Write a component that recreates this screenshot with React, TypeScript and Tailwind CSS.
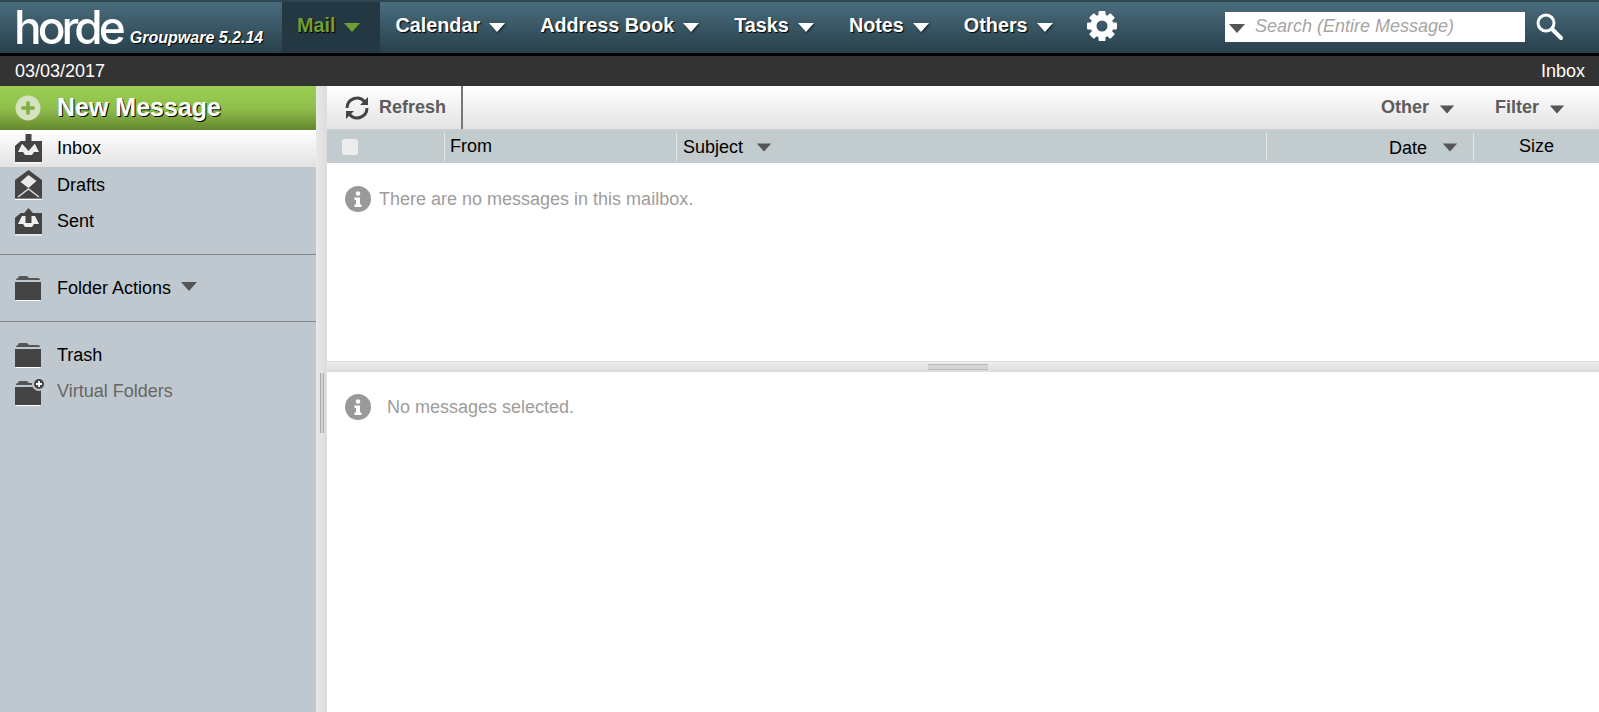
const Caret = ({ className }: { className: string }) => (
  <svg width="18" height="11" viewBox="0 0 18 11" className={className}>
    <path d="M1 1h16l-8 9z" fill="currentColor" />
  </svg>
);

const NavItem = ({ text, active }: { text: string; active?: boolean }) => (
  <div
    className={`flex h-full items-center gap-[8px] pb-[4px] ${
      active ? 'bg-[#233843] pl-[15px] pr-[19px] text-[#6f9e32]' : 'text-white'
    }`}
  >
    <span className="text-[19.800px] font-bold [text-shadow:1px_1px_1px_#000]">{text}</span>
    <Caret className={active ? 'mt-[3px] text-[#6f9e32]' : 'mt-[3px] text-white drop-shadow-[1px_1px_1px_rgba(0,0,0,0.6)]'} />
  </div>
);

const Gear = () => (
  <svg width="32" height="32" viewBox="0 0 32 32" className="blur-[0.4px]">
    {[0, 45, 90, 135, 180, 225, 270, 315].map((a) => (
      <rect key={a} x="12.500" y="1" width="7" height="8" rx="1" fill="#fff" transform={`rotate(${a} 16 16)`} />
    ))}
    <circle cx="16" cy="16" r="8.500" fill="none" stroke="#fff" strokeWidth="6" />
  </svg>
);

const TrayIcon = ({ up }: { up?: boolean }) => (
  <svg width="27" height="30" viewBox="0 0 27 30" className="blur-[0.3px]">
    <path d="M0 29h27" stroke="#fff" />
    <path d="M6 7h21l0 0v21H0V12z" fill="#444" transform="translate(0 0)" />
    <path d="M0 12L6 7h15l6 5" fill="#444" />
    <path d="M7 10h13l4 8h-5l-2 3h-7l-2-3H3z" fill="#eee" />
    {up ? <path d="M13.500 2l7 8h-4v7h-6v-7h-4z" fill="#444" /> : <path d="M10.500 0h6v9h4l-7 8-7-8h4z" fill="#444" />}
  </svg>
);

const DraftsIcon = () => (
  <svg width="27" height="30" viewBox="0 0 27 30" className="blur-[0.3px]">
    <path d="M0 29.500h27" stroke="#fff" />
    <path d="M13.500 0L27 10v18.500H0V10z" fill="#444" />
    <path d="M13.500 5l8 6-8 7-8-6z" fill="#e8eaea" />
    <path d="M3 27l10.500-8L24 27" fill="none" stroke="#d8dcdc" strokeWidth="1.500" />
  </svg>
);

const FolderIcon = () => (
  <svg width="26" height="25" viewBox="0 0 26 25">
    <path d="M.5 24.500h25" stroke="#fff" />
    <path d="M3 2q0-2 2-2h6q2 0 3 2h9q2 0 2 2H1q0-2 2-2z" fill="#555" />
    <path d="M0 6h26v18H0z" fill="#444" />
  </svg>
);

const VirtualIcon = () => (
  <svg width="31" height="29" viewBox="0 0 31 29">
    <path d="M.5 28.500h25" stroke="#fff" />
    <path d="M3 6q0-2 2-2h6q2 0 3 2h9q2 0 2 2H1q0-2 2-2z" fill="#555" />
    <path d="M0 10h26v18H0z" fill="#444" />
    <circle cx="24" cy="7" r="7" fill="#bfc8ce" />
    <circle cx="24" cy="7" r="5" fill="#444" />
    <path d="M24 4v6M21 7h6" stroke="#fff" strokeWidth="1.800" />
  </svg>
);

const InfoIcon = () => (
  <svg width="26" height="26" viewBox="0 0 26 26">
    <circle cx="13" cy="13" r="13" fill="#999" />
    <circle cx="13" cy="7.500" r="2.300" fill="#fff" />
    <path d="M9.500 11.500h5.500v7h1.500v2.500h-7v-2.500H11v-4.500H9.500z" fill="#fff" />
  </svg>
);

const SideRow = ({ icon, text, className }: { icon: React.ReactNode; text: string; className?: string }) => (
  <div className={`flex h-9 items-center ${className ?? ''}`}>
    <div className="flex w-[57px] shrink-0 pl-[15px]">{icon}</div>
    <span className="text-[18px]">{text}</span>
  </div>
);

export default function App() {
  return (
    <div className="flex h-screen flex-col overflow-hidden bg-white font-['Liberation_Sans',Arial,sans-serif]">
      <header className="flex h-[56px] shrink-0 items-stretch border-t-2 border-b-[3px] border-t-[#2e4552] border-b-black bg-gradient-to-b from-[#4a6d7d] to-[#28404c]">
        <div className="flex w-[282px] shrink-0 pl-[14px]">
          <span className="font-['Inter',sans-serif] text-[46px] font-medium leading-[50px] tracking-[-4px] text-white blur-[0.6px]">
            horde
          </span>
          <span className="ml-[8px] mt-[26px] text-[16px] font-bold italic leading-5 whitespace-nowrap text-white [text-shadow:1px_1px_1px_#000]">
            Groupware 5.2.14
          </span>
        </div>
        <NavItem text="Mail" active />
        <div className="ml-[15px] flex h-full gap-[34px]">
          <NavItem text="Calendar" />
          <NavItem text="Address Book" />
          <NavItem text="Tasks" />
          <NavItem text="Notes" />
          <NavItem text="Others" />
        </div>
        <div className="ml-[32px] flex items-center pb-[3px]">
          <Gear />
        </div>
        <div className="ml-auto flex items-center pb-[2px] pr-[33px]">
          <div className="flex h-[30px] w-[300px] items-center bg-white pl-[3px]">
            <Caret className="mt-[3px] text-[#555]" />
            <span className="ml-[9px] text-[18px] italic text-[#a8a4a4]">Search (Entire Message)</span>
          </div>
          <svg width="32" height="32" viewBox="0 0 32 32" className="ml-[9px] blur-[0.3px]">
            <circle cx="12" cy="12" r="8" fill="none" stroke="#fff" strokeWidth="3" />
            <path d="M18 18l9 9" stroke="#fff" strokeWidth="4" strokeLinecap="round" />
          </svg>
        </div>
      </header>
      <div className="flex h-[30px] shrink-0 items-center justify-between bg-[#333] px-[15px] pr-[14px] text-[18px] text-white">
        <span>03/03/2017</span>
        <span>Inbox</span>
      </div>
      <div className="flex min-h-0 flex-1">
        <aside className="w-[316px] shrink-0 bg-[#bfc8ce] text-black">
          <div className="flex h-11 items-center bg-gradient-to-b from-[#9bd052] via-[#8fbf4c] to-[#66882f] pl-[15px]">
            <svg width="26" height="26" viewBox="0 0 26 26">
              <circle cx="13" cy="13" r="12.500" fill="#d5e2c0" />
              <path d="M13 6.500v13M6.500 13h13" stroke="#7fae42" strokeWidth="3.500" />
            </svg>
            <span className="ml-[16px] text-[25px] font-bold text-white [text-shadow:1px_1px_0_#000]">New Message</span>
          </div>
          <SideRow
            icon={<TrayIcon />}
            text="Inbox"
            className="!h-[37px] bg-gradient-to-b from-white to-[#e2e2e2]"
          />
          <SideRow icon={<DraftsIcon />} text="Drafts" />
          <SideRow icon={<TrayIcon up />} text="Sent" />
          <div className="mt-[15px] border-t border-[#808585]" />
          <div className="flex h-[66px] items-center pt-[1px]">
            <SideRow icon={<FolderIcon />} text="Folder Actions" />
            <Caret className="mb-[4px] ml-[9px] text-[#555]" />
          </div>
          <div className="border-t border-[#808585]" />
          <div className="mt-[15px]">
            <SideRow icon={<FolderIcon />} text="Trash" />
            <SideRow icon={<VirtualIcon />} text="Virtual Folders" className="text-[#666]" />
          </div>
        </aside>
        <div className="flex w-[11px] shrink-0 justify-center bg-gradient-to-r from-[#e8e8e8] to-[#dcdcdc]">
          <div className="mt-[287px] h-[60px] w-[4px] border-x border-[#aaa] bg-[#d4d4d4]" />
        </div>
        <main className="flex min-w-0 flex-1 flex-col">
          <div className="flex h-[45px] shrink-0 items-stretch border-b-2 border-[#c8cccc] bg-gradient-to-b from-white to-[#e3e3e3] text-[18px] font-bold text-[#5c5c5c]">
            <div className="flex w-[136px] items-center border-r-2 border-[#777] pl-[17px]">
              <svg width="26" height="26" viewBox="0 0 26 26" fill="none" stroke="#444" strokeWidth="3" className="blur-[0.3px]">
                <path d="M3 13A10 10 0 0 1 20.500 6.500" />
                <path d="M23 13A10 10 0 0 1 5.500 19.500" />
                <path d="M24 2v8h-8z" fill="#444" stroke="none" />
                <path d="M2 24v-8h8z" fill="#444" stroke="none" />
              </svg>
              <span className="ml-[9px]">Refresh</span>
            </div>
            <div className="ml-auto flex items-center gap-[9px] pr-[33px]">
              <span>Other</span>
              <Caret className="mt-[3px] scale-90 text-[#555]" />
              <span className="ml-[30px]">Filter</span>
              <Caret className="mt-[3px] scale-90 text-[#555]" />
            </div>
          </div>
          <div className="flex h-[32px] shrink-0 items-stretch bg-[#c2cbce] text-[18px] text-black">
            <div className="flex w-[117px] items-center pl-[15px]">
              <div className="h-4 w-4 rounded-[2px] bg-[#ececec]" />
            </div>
            <div className="my-[2px] flex w-[232px] items-center border-l border-[#e4e8e9] pl-[5px]">
              <span className="mb-[2px]">From</span>
            </div>
            <div className="my-[2px] flex flex-1 items-center border-l border-[#e4e8e9] pl-[6px]">
              <span>Subject</span>
              <Caret className="ml-[12px] scale-90 text-[#555]" />
            </div>
            <div className="my-[2px] flex w-[207px] items-center justify-end border-l border-[#e4e8e9] pr-[14px]">
              <span className="mt-[2px]">Date</span>
              <Caret className="ml-[14px] scale-90 text-[#555]" />
            </div>
            <div className="my-[2px] flex w-[126px] items-center justify-center border-l border-[#e4e8e9]">
              <span className="mb-[2px]">Size</span>
            </div>
          </div>
          <div className="flex h-[198px] shrink-0 items-start pl-[18px] pt-[23px] text-[#a09c9c]">
            <InfoIcon />
            <span className="ml-[8px] text-[18px] leading-[26px]">There are no messages in this mailbox.</span>
          </div>
          <div className="flex h-[11px] shrink-0 items-center justify-center border-t border-[#dcdcdc] bg-gradient-to-b from-[#eee] to-[#dcdcdc] pr-[10px]">
            <div className="h-[6px] w-[60px] border-y border-[#bbb] bg-[#d4d4d4]" />
          </div>
          <div className="flex flex-1 items-start pl-[18px] pt-[22px] text-[#a09c9c]">
            <InfoIcon />
            <span className="ml-[16px] text-[18px] leading-[26px]">No messages selected.</span>
          </div>
        </main>
      </div>
    </div>
  );
}
